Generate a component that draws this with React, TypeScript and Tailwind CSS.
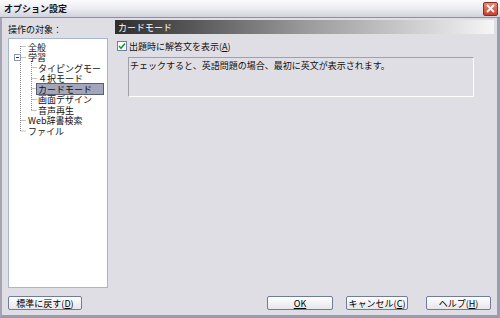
import React from 'react';

const font = { fontFamily: '"Noto Sans CJK JP", "Noto Sans", sans-serif' };

const Btn: React.FC<{ w: string; children: React.ReactNode; className?: string }> = ({ w, children, className }) => (
  <button
    className={`${w} ${className ?? ''} h-[14px] flex items-center justify-center rounded-[2px] border border-[#6f7c9c] bg-gradient-to-b from-white to-[#e6e6ec] text-[9px] leading-none text-black`}
  >
    {children}
  </button>
);

const TreeRow: React.FC<{ indent: 'top' | 'child'; selected?: boolean; children: React.ReactNode }> = ({ indent, selected, children }) => (
  <div className={`h-[10.5px] flex items-center ${indent === 'top' ? 'pl-[18px]' : 'pl-[28px]'}`}>
    <span
      className={`h-[10px] flex items-center text-[9px] leading-[9px] whitespace-nowrap pl-[1px] ${
        selected ? 'w-[66px] bg-[#a3a6ba] outline outline-1 outline-[#5a5e70]' : ''
      }`}
    >
      {children}
    </span>
  </div>
);

export default function App() {
  return (
    <div className="w-[500px] h-[318px] flex flex-col bg-[#dfdee4] text-[#111] select-none" style={font}>
      {/* title bar */}
      <div className="h-[18px] flex items-center justify-between pl-[4px] pr-[2px] bg-gradient-to-b from-[#fbfbfd] via-[#ececf2] to-[#d2d2de] border-b border-[#8e8ea6]">
        <span className="text-[9px] font-bold leading-none">オプション設定</span>
        <div className="w-[15px] h-[14px] rounded-[2px] border border-[#8a2a24] bg-gradient-to-b from-[#e58a7a] to-[#c3422f] flex items-center justify-center">
          <svg width="9" height="9" viewBox="0 0 9 9">
            <path d="M1 1 L8 8 M8 1 L1 8" stroke="white" strokeWidth="1.8" />
          </svg>
        </div>
      </div>

      {/* body */}
      <div className="flex-1 flex flex-col border-l-2 border-l-[#a4a4b4] border-r-[3px] border-r-[#9c9cb4] border-b-[3px] border-b-[#9a9aac] pl-[6px] pr-[3px] pt-[2px] pb-[5px]">
        <div className="flex-1 flex gap-[7px]">
          {/* left */}
          <div className="w-[100px] flex flex-col">
            <div className="h-[18px] flex items-center text-[9px] leading-none">操作の対象：</div>
            <div className="flex-1 relative bg-white border border-[#a6b6cc] pt-[3px]">
              <svg className="absolute left-0 top-0" width="100" height="100" viewBox="0 0 100 100">
                <g stroke="#888" strokeWidth="1" strokeDasharray="1 1" fill="none">
                  <path d="M11.5 7 V92" />
                  <path d="M11.5 7.5 H17" />
                  <path d="M11.5 18.5 H17" />
                  <path d="M11.5 81.5 H17" />
                  <path d="M11.5 92 H17" />
                  <path d="M22.5 22 V71.5" />
                  <path d="M22.5 28.5 H28" />
                  <path d="M22.5 39.5 H28" />
                  <path d="M22.5 49.5 H28" />
                  <path d="M22.5 60.5 H28" />
                  <path d="M22.5 71.5 H28" />
                </g>
                <rect x="5.5" y="15.5" width="6" height="6" fill="white" stroke="#8a9ab4" />
                <path d="M7 18.5 H10" stroke="#333" />
              </svg>
              <div className="relative">
                <TreeRow indent="top">全般</TreeRow>
                <TreeRow indent="top">学習</TreeRow>
                <TreeRow indent="child">タイピングモー</TreeRow>
                <TreeRow indent="child">４択モード</TreeRow>
                <TreeRow indent="child" selected>カードモード</TreeRow>
                <TreeRow indent="child">画面デザイン</TreeRow>
                <TreeRow indent="child">音声再生</TreeRow>
                <TreeRow indent="top">Web辞書検索</TreeRow>
                <TreeRow indent="top">ファイル</TreeRow>
              </div>
            </div>
          </div>

          {/* right */}
          <div className="flex-1 flex flex-col">
            <div className="h-[14px] flex items-center pl-[3px] bg-gradient-to-r from-[#2e2e2e] via-[#9a9a9a] to-[#f6f6f6] text-white text-[9px] leading-none">
              カードモード
            </div>
            <div className="mt-[6px] h-[12px] flex items-center gap-[2px] pl-[2px]">
              <div className="w-[10px] h-[10px] bg-white border border-[#6f7fa0] flex items-center justify-center">
                <svg width="8" height="8" viewBox="0 0 8 8">
                  <path d="M1 4 L3 6.2 L7 1.5" stroke="#1f9a2a" strokeWidth="1.6" fill="none" />
                </svg>
              </div>
              <span className="text-[9px] leading-none">
                出題時に解答文を表示(<span className="underline">A</span>)
              </span>
            </div>
            <div className="mt-[5px] ml-[13px] mr-[20px] h-[40px] border border-t-[#a0a0a8] border-l-[#a0a0a8] border-b-white border-r-white px-[1px] pt-[3px] text-[9px] leading-none">
              チェックすると、英語問題の場合、最初に英文が表示されます。
            </div>
          </div>
        </div>

        {/* buttons */}
        <div className="mt-[8px] flex items-center">
          <Btn w="w-[74px]">
            標準に戻す(<span className="underline">D</span>)
          </Btn>
          <div className="ml-auto mr-[3px] flex items-center">
            <Btn w="w-[66px]">
              <span className="underline">OK</span>
            </Btn>
            <Btn w="w-[62px]" className="ml-[13px]">
              キャンセル(<span className="underline">C</span>)
            </Btn>
            <Btn w="w-[65px]" className="ml-[18px]">
              ヘルプ(<span className="underline">H</span>)
            </Btn>
          </div>
        </div>
      </div>
    </div>
  );
}
